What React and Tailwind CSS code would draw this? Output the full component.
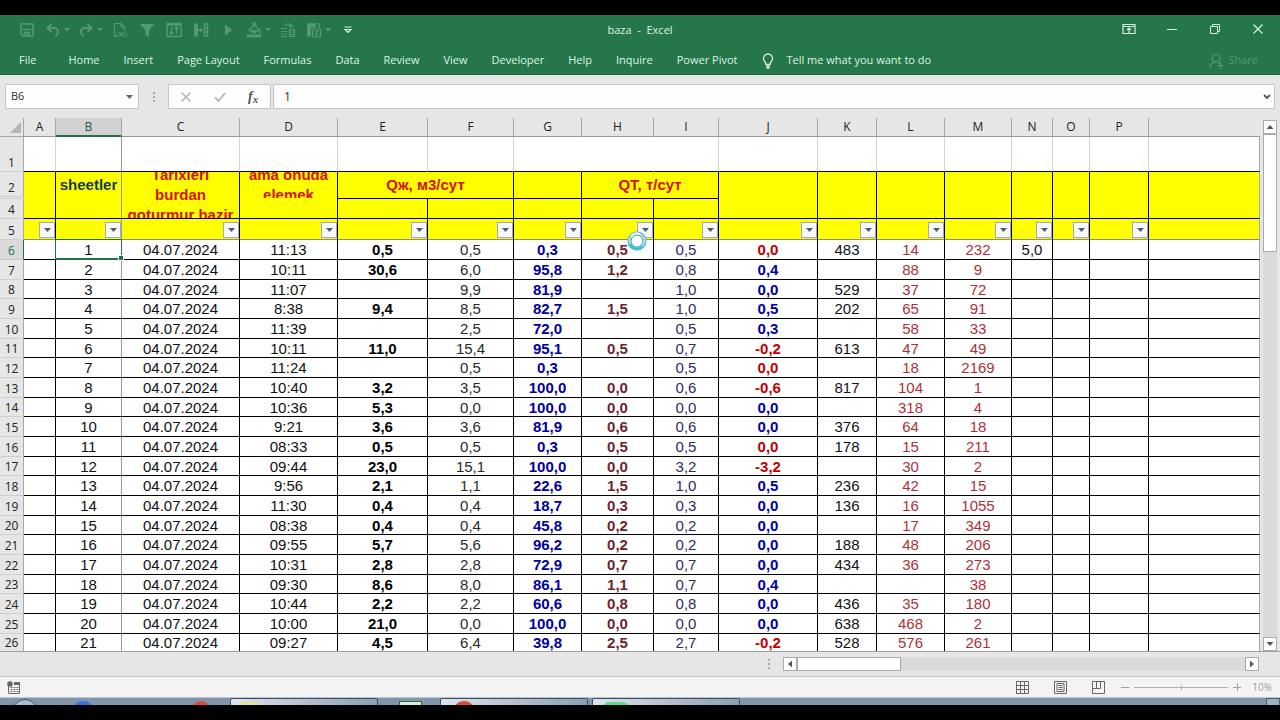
import clsx from "clsx";

const TABS = [
  "Home",
  "Insert",
  "Page Layout",
  "Formulas",
  "Data",
  "Review",
  "View",
  "Developer",
  "Help",
  "Inquire",
  "Power Pivot",
];

const COLUMNS = [
  { id: "A", width: "w-[32px]" },
  { id: "B", width: "w-[66px]" },
  { id: "C", width: "w-[118px]" },
  { id: "D", width: "w-[98px]" },
  { id: "E", width: "w-[90px]" },
  { id: "F", width: "w-[86px]" },
  { id: "G", width: "w-[68px]" },
  { id: "H", width: "w-[72px]" },
  { id: "I", width: "w-[65px]" },
  { id: "J", width: "w-[99px]" },
  { id: "K", width: "w-[59px]" },
  { id: "L", width: "w-[68px]" },
  { id: "M", width: "w-[67px]" },
  { id: "N", width: "w-[41px]" },
  { id: "O", width: "w-[37px]" },
  { id: "P", width: "w-[59px]" },
];

const TONES = {
  E: "font-bold text-black",
  F: "text-[#2a2a2a]",
  G: "font-bold text-[#0000a0]",
  H: "font-bold text-[#6e2430]",
  I: "text-[#2c2c66]",
  J: "font-bold text-[#0000a0]",
  L: "text-[#b03038]",
  M: "text-[#b03038]",
};

// time, E, F, G, H, I, J, K, L, M, N
const RECORDS = [
  ["11:13", "0,5", "0,5", "0,3", "0,5", "0,5", "0,0", "483", "14", "232", "5,0"],
  ["10:11", "30,6", "6,0", "95,8", "1,2", "0,8", "0,4", "", "88", "9"],
  ["11:07", "", "9,9", "81,9", "", "1,0", "0,0", "529", "37", "72"],
  ["8:38", "9,4", "8,5", "82,7", "1,5", "1,0", "0,5", "202", "65", "91"],
  ["11:39", "", "2,5", "72,0", "", "0,5", "0,3", "", "58", "33"],
  ["10:11", "11,0", "15,4", "95,1", "0,5", "0,7", "-0,2", "613", "47", "49"],
  ["11:24", "", "0,5", "0,3", "", "0,5", "0,0", "", "18", "2169"],
  ["10:40", "3,2", "3,5", "100,0", "0,0", "0,6", "-0,6", "817", "104", "1"],
  ["10:36", "5,3", "0,0", "100,0", "0,0", "0,0", "0,0", "", "318", "4"],
  ["9:21", "3,6", "3,6", "81,9", "0,6", "0,6", "0,0", "376", "64", "18"],
  ["08:33", "0,5", "0,5", "0,3", "0,5", "0,5", "0,0", "178", "15", "211"],
  ["09:44", "23,0", "15,1", "100,0", "0,0", "3,2", "-3,2", "", "30", "2"],
  ["9:56", "2,1", "1,1", "22,6", "1,5", "1,0", "0,5", "236", "42", "15"],
  ["11:30", "0,4", "0,4", "18,7", "0,3", "0,3", "0,0", "136", "16", "1055"],
  ["08:38", "0,4", "0,4", "45,8", "0,2", "0,2", "0,0", "", "17", "349"],
  ["09:55", "5,7", "5,6", "96,2", "0,2", "0,2", "0,0", "188", "48", "206"],
  ["10:31", "2,8", "2,8", "72,9", "0,7", "0,7", "0,0", "434", "36", "273"],
  ["09:30", "8,6", "8,0", "86,1", "1,1", "0,7", "0,4", "", "", "38"],
  ["10:44", "2,2", "2,2", "60,6", "0,8", "0,8", "0,0", "436", "35", "180"],
  ["10:00", "21,0", "0,0", "100,0", "0,0", "0,0", "0,0", "638", "468", "2"],
  ["09:27", "4,5", "6,4", "39,8", "2,5", "2,7", "-0,2", "528", "576", "261"],
];

// differences that are still flagged red in column J
const FLAGGED = [6, 11, 12, 13, 16, 17, 26];

const Icon = ({ w = 16, h = 16, children }) => (
  <svg
    width={w}
    height={h}
    viewBox={`0 0 ${w} ${h}`}
    fill="none"
    stroke="currentColor"
    className="shrink-0"
    aria-hidden="true"
  >
    {children}
  </svg>
);

const Caret = () => (
  <svg width="8" height="5" viewBox="0 0 8 5" fill="currentColor" className="shrink-0">
    <path d="M1 0h6L4 3.500z" />
  </svg>
);

const QuickButton = ({ label, menu, bright, children }) => (
  <button
    type="button"
    aria-label={label}
    className={clsx(
      "flex h-[30px] items-center justify-center",
      menu ? "w-[33px] gap-[2px] pl-[2px]" : "w-[27px]",
      bright ? "text-[#d5f0df]" : "text-[#529a72]"
    )}
  >
    {children}
    {menu && <Caret />}
  </button>
);

const QuickAccess = () => (
  <div className="flex pl-[13px]">
    <QuickButton label="Save">
      <Icon>
        <path d="M2 2h12v12H4L2 12z" strokeWidth="1.600" />
        <path d="M4 7.500h8M5.500 14v-3.500h5V14M8 11.500V14" strokeWidth="1.600" />
      </Icon>
    </QuickButton>
    <QuickButton label="Undo" menu>
      <Icon>
        <path d="M6.500 2L2.500 6l4 4M3 6h6c5 0 5 5.500 1.500 8" strokeWidth="2" />
      </Icon>
    </QuickButton>
    <QuickButton label="Redo" menu>
      <Icon>
        <path d="M9.500 2l4 4-4 4M13 6H7c-5 0-5 5.500-1.500 8" strokeWidth="2" />
      </Icon>
    </QuickButton>
    <QuickButton label="Document links">
      <Icon>
        <path d="M5 14.500H2.500v-13H9L12.500 5v4M9 1.500V5h3.500" strokeWidth="1.200" />
        <rect x="4.600" y="10.600" width="5" height="3.800" rx="1.900" />
        <rect x="9.600" y="10.600" width="5" height="3.800" rx="1.900" />
        <path d="M7.500 12.500h4" />
      </Icon>
    </QuickButton>
    <QuickButton label="Filter">
      <Icon>
        <path d="M1 2h14L10 8.500V15L6.500 13V8.500z" fill="currentColor" stroke="none" />
      </Icon>
    </QuickButton>
    <QuickButton label="Sort">
      <Icon>
        <path d="M1 1.500h14v13H1zM1 3h14" strokeWidth="1.400" />
        <path d="M5.500 5v7M3.500 10l2 2 2-2M10.500 12V5M8.500 7l2-2 2 2" strokeWidth="1.400" />
      </Icon>
    </QuickButton>
    <QuickButton label="Text to columns">
      <Icon>
        <path d="M1 1.500h4v13H1z" fill="currentColor" stroke="none" />
        <path d="M11.500 2h3v12h-3zM11.500 6h3M11.500 10h3" strokeWidth="1.500" />
        <path d="M5.500 8h4M8 6v4M5.500 7v2" strokeWidth="1.300" />
      </Icon>
    </QuickButton>
    <QuickButton label="Run">
      <Icon>
        <path d="M5 2.500v11L12 8z" fill="currentColor" stroke="none" />
      </Icon>
    </QuickButton>
    <QuickButton label="Fill color" menu>
      <Icon>
        <path d="M3 8l5.500-5 4.500 4.500-5 4zM7 5V1.500c0-1 2.500-1 2.500 0V5" strokeWidth="1.300" />
        <path
          d="M4 8h8.500L8 11zM13 7c2 1.500 2 3.500 1.500 4.500-1 .5-1.500-.500-1.500-1.500z"
          fill="currentColor"
          stroke="none"
        />
        <path d="M1 12.500h14v3H1z" fill="currentColor" stroke="none" />
      </Icon>
    </QuickButton>
    <QuickButton label="Convert">
      <Icon>
        <path d="M1 6.500h6M1 9.500h6M1 12h6M1 14.500h6M9.500 7.500h5v7h-5zM9.500 10h5M9.500 12.500h5" strokeWidth="1.200" />
        <path d="M5 4c1-3 5-3 6 .5M9 3l2 2 2-2" strokeWidth="1.300" />
      </Icon>
    </QuickButton>
    <QuickButton label="Paste special" menu>
      <Icon>
        <path d="M1 1.500h4v13H1zM5 1.500h4v4H5z" fill="currentColor" stroke="none" />
        <path d="M1.500 2h12v4M9 2v4" strokeWidth="1.200" />
        <path d="M6.500 7h8v8h-8zM8.500 9.500h4M8.500 12.500h4M12 8l-3 6" strokeWidth="1.200" />
      </Icon>
    </QuickButton>
    <QuickButton label="Customize Quick Access Toolbar" bright>
      <Icon w={10} h={10}>
        <path d="M1.500 2h7M2 4.500L5 7.500l3-3z" strokeWidth="1.200" />
      </Icon>
    </QuickButton>
  </div>
);

const WindowButton = ({ label, children }) => (
  <button
    type="button"
    aria-label={label}
    className="flex h-[28px] w-[43px] items-center justify-center text-[#d5f0df]"
  >
    {children}
  </button>
);

const TitleBar = () => (
  <div className="grid h-[30px] grid-cols-[1fr_auto_1fr]">
    <QuickAccess />
    <h1 className="text-[11px] leading-[30px] whitespace-pre">{"baza  -  Excel"}</h1>
    <div className="flex justify-end pr-[1px]">
      <WindowButton label="Ribbon display options">
        <Icon w={14} h={12}>
          <path d="M1 1.500h12v9H1zM1 3.500h12M7 10V5M5 7l2-2 2 2" strokeWidth="1.200" />
        </Icon>
      </WindowButton>
      <WindowButton label="Minimize">
        <Icon w={10} h={10}>
          <path d="M0 5.500h10" />
        </Icon>
      </WindowButton>
      <WindowButton label="Restore">
        <Icon w={10} h={10}>
          <path d="M.5 2.500h7v7h-7zM2.500 2.500v-2h7v7h-2" />
        </Icon>
      </WindowButton>
      <WindowButton label="Close">
        <Icon w={10} h={10}>
          <path d="M.5.5l9 9M9.500.5l-9 9" strokeWidth="1.200" />
        </Icon>
      </WindowButton>
    </div>
  </div>
);

const RibbonTabs = () => (
  <nav className="flex h-[29px] items-center pt-[2px] pr-[22px] pl-[19px] text-[11px]">
    <button type="button" className="mr-[32px]">
      File
    </button>
    <div className="flex gap-[24px]">
      {TABS.map((tab) => (
        <button key={tab} type="button" className="whitespace-nowrap">
          {tab}
        </button>
      ))}
    </div>
    <button type="button" className="ml-[25px] flex items-center gap-[12px] whitespace-nowrap">
      <Icon w={12} h={16}>
        <path
          d="M4 11.500C4 9 1.500 8.500 1.500 5.500a4.500 4.500 0 0 1 9 0C10.500 8.500 8 9 8 11.500zM4 13.500h4M4.500 15.200h3"
          strokeWidth="1.300"
        />
      </Icon>
      Tell me what you want to do
    </button>
    <button type="button" className="ml-auto flex items-center gap-[4px] text-[#529a72]">
      <Icon w={15} h={16}>
        <circle cx="7" cy="5" r="4" strokeWidth="1.200" />
        <path d="M1 15c0-4 2-5.500 5-6M9 9l2 1.500M11.500 9.500v6M8.500 12.500h6" strokeWidth="1.200" />
      </Icon>
      Share
    </button>
  </nav>
);

const Dots = () => (
  <span className="flex flex-col gap-[2px]" aria-hidden="true">
    <i className="size-[2px] bg-[#a8a8a8]" />
    <i className="size-[2px] bg-[#a8a8a8]" />
    <i className="size-[2px] bg-[#a8a8a8]" />
  </span>
);

const FormulaBar = () => (
  <div className="flex h-[43px] items-start bg-[#e6e6e6] pt-[9px] pr-[5px] pl-[5px] text-[12px] text-[#333]">
    <div className="flex h-[25px] w-[134px] border border-[#c6c6c6] bg-[#fdfdfd]">
      <input
        aria-label="Name box"
        defaultValue="B6"
        className="min-w-0 flex-1 bg-transparent pl-[5px] text-[11px] outline-none"
      />
      <button type="button" aria-label="Show names" className="flex w-[17px] items-center justify-center text-[#666]">
        <svg width="7" height="4" viewBox="0 0 7 4" fill="currentColor">
          <path d="M0 0h7L3.500 4z" />
        </svg>
      </button>
    </div>
    <div className="flex h-[25px] w-[29px] items-center justify-center">
      <Dots />
    </div>
    <div className="flex h-[25px] w-[103px] border border-[#c6c6c6] bg-[#fdfdfd]">
      <button type="button" aria-label="Cancel" className="flex flex-1 items-center justify-center text-[#b5b5b5]">
        <Icon w={10} h={10}>
          <path d="M.5.5l9 9M9.500.5l-9 9" strokeWidth="1.500" />
        </Icon>
      </button>
      <button type="button" aria-label="Enter" className="flex flex-1 items-center justify-center text-[#b5b5b5]">
        <Icon w={12} h={10}>
          <path d="M1 5.500L4.500 9 11 1" strokeWidth="1.800" />
        </Icon>
      </button>
      <button
        type="button"
        aria-label="Insert function"
        className="flex flex-1 items-center justify-center font-['Liberation_Serif',serif] text-[14px] font-bold text-[#555] italic"
      >
        f<sub className="text-[11px]">x</sub>
      </button>
    </div>
    <div className="ml-[2px] flex h-[25px] flex-1 border border-[#c6c6c6] bg-[#fdfdfd]">
      <input
        aria-label="Formula"
        defaultValue="1"
        className="min-w-0 flex-1 bg-transparent pl-[10px] outline-none"
      />
      <button type="button" aria-label="Expand formula bar" className="flex w-[15px] items-center justify-center text-[#555]">
        <Icon w={8} h={6}>
          <path d="M1 1l3 3 3-3" strokeWidth="1.800" />
        </Icon>
      </button>
    </div>
  </div>
);

const RowHeader = ({ n, className }) => (
  <th
    scope="row"
    className={clsx(
      "border-r border-b p-0 align-bottom font-['Open_Sans',sans-serif] text-[12px] leading-[17px] font-normal",
      n === 6
        ? "border-r-[#217346] border-b-[#c8c8c8] bg-[#dadada] text-[#217346]"
        : "border-r-[#a8a8a8] border-b-[#cfcfcf] bg-[#e6e6e6] text-[#222]",
      className
    )}
  >
    {n}
  </th>
);

// the pane is frozen to the right of column B
const edge = (id) => (id === "B" ? "border-r-[#9a9a9a]" : "border-r-black");

const Filler = ({ className, ...rest }) => (
  <td className={clsx("border-r border-r-[#a8a8a8]", className)} {...rest} />
);

const HeaderRows = () => {
  const band = "border-r border-b border-b-black bg-[#ffff00] p-0 align-top font-bold";
  return (
    <>
      <tr className="h-[35px]">
        <RowHeader n={1} />
        {COLUMNS.map(({ id }) => (
          <td
            key={id}
            className={clsx(
              "border-r border-b border-b-black",
              id === "B" && "border-r-[#9a9a9a]",
              id === "G" || id === "H" ? "border-r-white" : id !== "B" && "border-r-[#d4d4d4]"
            )}
          />
        ))}
        <Filler className="border-b border-b-black" />
      </tr>
      <tr className="h-[27px]">
        <RowHeader n={2} className="border-b-[3px] border-b-[#b0b0b0] [border-bottom-style:double]" />
        <td rowSpan={2} className={clsx(band, "border-r-black")} />
        <td rowSpan={2} className={clsx(band, "border-r-[#9a9a9a] text-center leading-[26px] text-[#153c50]")}>
          sheetler
        </td>
        <td rowSpan={2} className={clsx(band, "border-r-black text-center text-[#d8100c]")}>
          <div className="flex h-[46px] items-center justify-center overflow-hidden leading-[20px] whitespace-nowrap">
            <span>
              Tarixleri
              <br />
              burdan
              <br />
              goturmur hazir
            </span>
          </div>
        </td>
        <td rowSpan={2} className={clsx(band, "border-r-black text-center text-[#d8100c]")}>
          <div className="flex h-[26px] items-center justify-center overflow-hidden leading-[20px] whitespace-nowrap">
            <span>
              ama onuda
              <br />
              elemek
            </span>
          </div>
        </td>
        <td colSpan={2} className={clsx(band, "border-r-black text-center leading-[26px] text-[#d8100c]")}>
          Qж, м3/сут
        </td>
        <td className={clsx(band, "border-r-black")} />
        <td colSpan={2} className={clsx(band, "border-r-black text-center leading-[26px] text-[#d8100c]")}>
          QT, т/сут
        </td>
        {["J", "K", "L", "M", "N", "O", "P"].map((id) => (
          <td key={id} rowSpan={2} className={clsx(band, "border-r-black")} />
        ))}
        <Filler rowSpan={2} className="border-b border-b-black bg-[#ffff00]" />
      </tr>
      <tr className="h-[20px]">
        <RowHeader n={4} />
        {["E", "F", "G", "H", "I"].map((id) => (
          <td key={id} className={clsx(band, "border-r-black")} />
        ))}
      </tr>
      <tr className="h-[21px]">
        <RowHeader n={5} />
        {COLUMNS.map(({ id }) => (
          <td key={id} className={clsx("border-r border-b border-b-[#8a8a8a] bg-[#ffff00] p-0", edge(id))}>
            <div className="flex h-[20px] items-end justify-end pb-[1px]">
              <button
                type="button"
                aria-label={`Filter column ${id}`}
                className="flex size-[16px] items-center justify-center border border-[#a3a9b5] bg-[#f7f8fb] text-[#555b66]"
              >
                <svg width="7" height="4" viewBox="0 0 7 4" fill="currentColor">
                  <path d="M0 0h7L3.500 4z" />
                </svg>
              </button>
            </div>
          </td>
        ))}
        <Filler className="border-b border-b-[#8a8a8a] bg-[#ffff00]" />
      </tr>
    </>
  );
};

const BusyRing = () => (
  <svg
    width="20"
    height="20"
    viewBox="0 0 20 20"
    fill="none"
    className="absolute -top-[9px] left-[45px] z-10"
    aria-hidden="true"
  >
    <circle cx="10" cy="10" r="5.500" fill="#ffffff" />
    <circle cx="10" cy="10" r="7.500" stroke="#3f9fb8" strokeWidth="4" />
    <circle cx="10" cy="10" r="7.500" stroke="#a9dbe8" strokeWidth="2.600" />
    <path d="M3 13a7.500 7.500 0 0 0 12.500 2.300" stroke="#35c4c8" strokeWidth="2.600" />
    <path d="M4 5.500a7.500 7.500 0 0 1 9-2.300" stroke="#dff3f8" strokeWidth="2" />
  </svg>
);

const DataRow = ({ record, index }) => {
  const n = index + 6;
  const [time, ...rest] = record;
  const values = [null, index + 1, "04.07.2024", time, ...rest];
  const last = index === RECORDS.length - 1;
  const height = last ? "h-[17px]" : index % 3 === 2 ? "h-[19px]" : "h-[20px]";
  const line = last ? "border-b-0" : "border-b border-b-black";

  return (
    <tr className={height}>
      <RowHeader n={n} className={last && "border-b-0"} />
      {COLUMNS.map(({ id }, i) => (
        <td
          key={id}
          className={clsx(
            "relative border-r p-0 text-center leading-[17px]",
            line,
            edge(id),
            id === "J" && FLAGGED.includes(n) ? "font-bold text-[#c00000]" : TONES[id] || "text-[#111]"
          )}
        >
          {values[i]}
          {id === "B" && n === 6 && (
            <span className="absolute -inset-[1px] z-10 border border-b-2 border-[#217346]">
              <i className="absolute -right-[3px] -bottom-[3px] size-[6px] border border-white bg-[#217346]" />
            </span>
          )}
          {id === "H" && n === 6 && <BusyRing />}
        </td>
      ))}
      <Filler className={line} />
    </tr>
  );
};

const Sheet = () => (
  <table className="min-w-0 flex-1 table-fixed border-separate border-spacing-0 bg-white font-['Liberation_Sans',Arial,sans-serif] text-[15px]">
    <colgroup>
      <col className="w-[24px]" />
      {COLUMNS.map(({ id, width }) => (
        <col key={id} className={width} />
      ))}
      <col />
    </colgroup>
    <thead>
      <tr className="h-[19px] bg-[#e6e6e6] font-['Open_Sans',sans-serif] text-[12px] leading-[18px]">
        <th className="border-r border-b border-[#a8a8a8] p-0">
          <button type="button" aria-label="Select all" className="ml-auto block pr-[2px]">
            <svg width="11" height="11" viewBox="0 0 11 11" fill="#b4b4b4">
              <path d="M11 0v11H0z" />
            </svg>
          </button>
        </th>
        {COLUMNS.map(({ id }) => (
          <th
            key={id}
            scope="col"
            className={clsx(
              "border-r border-r-[#a8a8a8] p-0 font-normal",
              id === "B"
                ? "border-b-2 border-b-[#217346] bg-[#d2d2d2] leading-[17px] text-[#1d5c3a]"
                : "border-b border-b-[#999] text-[#222]"
            )}
          >
            {id}
          </th>
        ))}
        <th className="border-b border-b-[#999] p-0" />
      </tr>
    </thead>
    <tbody>
      <HeaderRows />
      {RECORDS.map((record, index) => (
        <DataRow key={index} record={record} index={index} />
      ))}
    </tbody>
  </table>
);

const ScrollButton = ({ label, d }) => (
  <button
    type="button"
    aria-label={label}
    className="flex size-[14px] shrink-0 items-center justify-center border border-[#ababab] bg-white text-[#555]"
  >
    <svg width="8" height="8" viewBox="0 0 8 8" fill="currentColor" className="shrink-0">
      <path d={d} />
    </svg>
  </button>
);

const VerticalScroll = () => (
  <div className="flex w-[20px] flex-col items-center bg-[#e6e6e6] pt-[2px]">
    <ScrollButton label="Scroll up" d="M0.500 6h7L4 2z" />
    <div className="w-[14px] flex-1 bg-[#dadada]">
      <div className="h-[118px] border border-[#ababab] bg-white" />
    </div>
    <ScrollButton label="Scroll down" d="M0.500 2h7L4 6z" />
  </div>
);

const SheetFooter = () => (
  <div className="flex h-[26px] items-center border-t border-b border-t-[#a0a0a0] border-b-[#c6c6c6] bg-[#e6e6e6] pr-[21px]">
    <div className="w-[61%]" />
    <div className="flex flex-1 items-center">
      <Dots />
      <div className="ml-[13px] flex flex-1">
        <ScrollButton label="Scroll left" d="M6 0.500v7L2 4z" />
        <div className="flex h-[14px] flex-1 bg-[#dadada]">
          <div className="w-[104px] border border-[#ababab] bg-white" />
        </div>
        <ScrollButton label="Scroll right" d="M2 0.500v7L6 4z" />
      </div>
    </div>
  </div>
);

const StatusBar = () => (
  <div className="flex h-[20px] items-center bg-[#f3f3f3] pr-[8px] pl-[7px] text-[#666]">
    <button type="button" aria-label="Record macro">
      <Icon w={13} h={13}>
        <path d="M1.500 5v7.500h11v-11H7" />
        <path d="M3.500 6.500h8M3.500 8.500h8M3.500 10.500h8" strokeDasharray="2 1" />
        <path d="M7 1h6v3H7z" fill="currentColor" stroke="none" />
        <circle cx="3" cy="3" r="2.800" fill="currentColor" stroke="none" />
      </Icon>
    </button>
    <div className="ml-auto flex items-center gap-[25px]">
      <button type="button" aria-label="Normal view">
        <Icon w={13} h={13}>
          <path d="M.5.5h12v12H.5zM.5 4.500h12M.5 8.500h12M4.500.5v12M8.500.5v12" />
        </Icon>
      </button>
      <button type="button" aria-label="Page layout view">
        <Icon w={13} h={13}>
          <path d="M.5.5h12v12H.5zM3 2.500h7v8H3zM4.500 4.500h4M4.500 6.500h4M4.500 8.500h4" />
        </Icon>
      </button>
      <button type="button" aria-label="Page break preview">
        <Icon w={13} h={13}>
          <path d="M.5.5h12v12H.5zM4.500.5v7M8.500.5v7M.5 7.500h8" />
        </Icon>
      </button>
    </div>
    <div className="ml-[16px] flex items-center gap-[5px] text-[#a0a0a0]">
      <button type="button" aria-label="Zoom out">
        <Icon w={8} h={8}>
          <path d="M0 4.500h8" />
        </Icon>
      </button>
      <input
        type="range"
        aria-label="Zoom"
        className="h-[9px] w-[94px] appearance-none bg-[linear-gradient(#b0b0b0,#b0b0b0),linear-gradient(#b0b0b0,#b0b0b0)] bg-[length:100%_1px,1px_5px] bg-center bg-no-repeat [&::-webkit-slider-thumb]:w-0 [&::-webkit-slider-thumb]:appearance-none"
      />
      <button type="button" aria-label="Zoom in">
        <Icon w={8} h={8}>
          <path d="M0 4.500h8M4.500 0v8" />
        </Icon>
      </button>
    </div>
    <span className="ml-[11px] text-[10px] text-[#a0a0a0]">10%</span>
  </div>
);

const taskButton =
  "flex h-[20px] w-[148px] items-start rounded-[2px] border border-[#3f4f60] bg-linear-to-r from-[#dde5ec] via-[#b5c2ce] to-[#8c9fb1]";

const Taskbar = () => (
  <div className="flex h-[8px] items-start overflow-hidden border-t border-[#b9c6d3] bg-[#8196aa]">
    <div className="mt-[1px] ml-[12px] size-[26px] shrink-0 rounded-full border border-[#40566b] bg-[#a9bfd2]" />
    <div className="mt-[3px] ml-[34px] size-[22px] shrink-0 rounded-full bg-[#3b6fe0]" />
    <div className="mt-[3px] ml-[97px] size-[20px] shrink-0 rounded-full bg-[#d84a3a]" />
    <button type="button" aria-label="File Explorer" className={clsx(taskButton, "ml-[19px] pl-[9px]")}>
      <i className="mt-[3px] block h-[14px] w-[18px] rounded-[2px] bg-[#e6e58a]" />
    </button>
    <div className="mt-[3px] ml-[21px] h-[20px] w-[23px] border border-[#2f6b3f] bg-[#d8efd8]" />
    <button type="button" aria-label="Recorder" className={clsx(taskButton, "ml-[18px] pl-[12px]")}>
      <i className="mt-[2px] block size-[22px] shrink-0 rounded-full bg-[#d84a3a]" />
    </button>
    <button type="button" aria-label="Messenger" className={clsx(taskButton, "ml-[4px] pl-[10px]")}>
      <i className="mt-[3px] block h-[14px] w-[26px] rounded-[6px] bg-[#63d98a]" />
    </button>
    <button
      type="button"
      aria-label="Show desktop"
      className="ml-auto h-[20px] w-[14px] border border-[#4d5f70] bg-[#9fb0bf]"
    />
  </div>
);

export default function App() {
  return (
    <div className="min-h-screen bg-black py-[15px] font-['Open_Sans','Noto_Sans',sans-serif]">
      <header className="border-b border-[#1c6139] bg-[#257749] text-[#dcf3e5]">
        <TitleBar />
        <RibbonTabs />
      </header>
      <main>
        <FormulaBar />
        <div className="flex">
          <Sheet />
          <VerticalScroll />
        </div>
        <SheetFooter />
        <StatusBar />
      </main>
      <Taskbar />
    </div>
  );
}
